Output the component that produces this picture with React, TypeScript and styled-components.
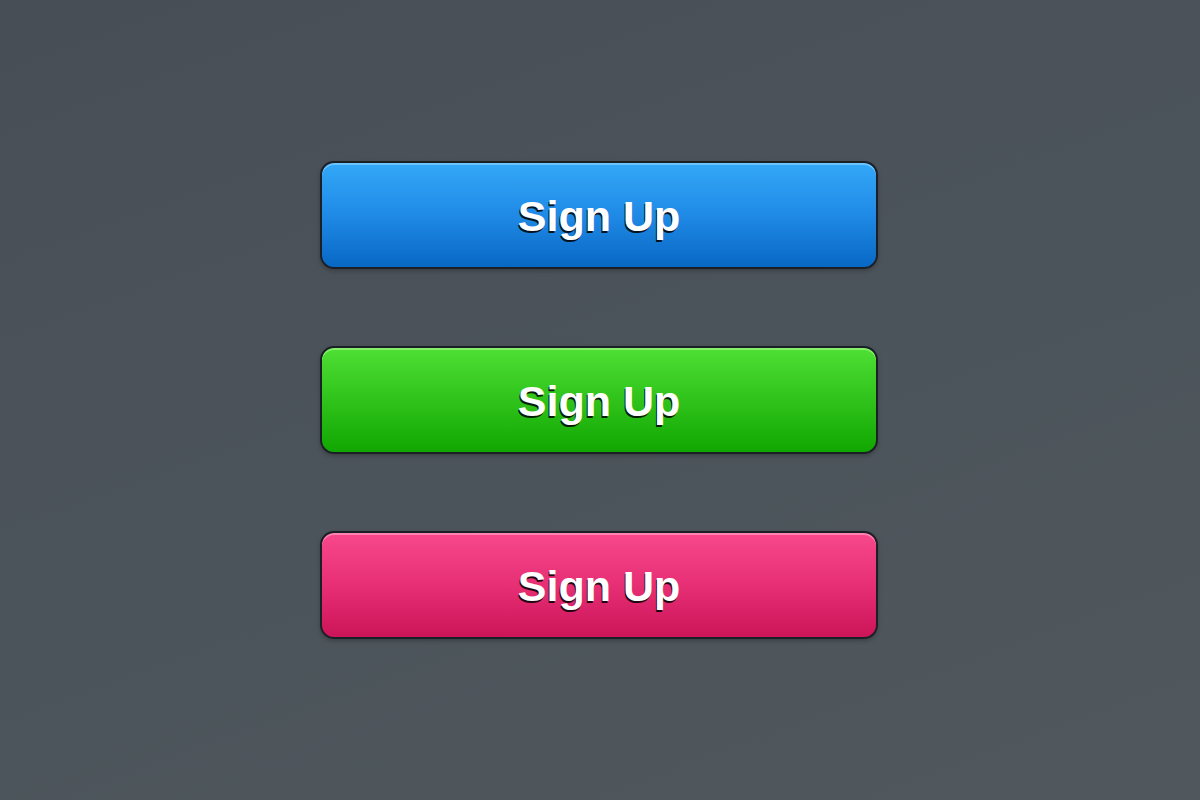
import React from "react";
import styled, { createGlobalStyle } from "styled-components";

const Global = createGlobalStyle`
  html, body { margin: 0; padding: 0; }
  body { font-family: "Liberation Sans", Arial, sans-serif; }
`;

const Page = styled.div`
  width: 1200px;
  height: 800px;
  background: linear-gradient(160deg, #484e56 0%, #4c545b 50%, #50585e 100%);
  display: flex;
  flex-direction: column;
  align-items: center;
  justify-content: center;
  gap: 77px;
`;

const palettes = {
  blue: { top: "#34a8f8", mid: "#1f8ae6", bottom: "#0868c4", hl: "#6cc4ff" },
  green: { top: "#4fdf35", mid: "#2fc31b", bottom: "#12a602", hl: "#86f06a" },
  pink: { top: "#f8488c", mid: "#e72f75", bottom: "#cc1459", hl: "#ff82b1" },
};

type Tone = keyof typeof palettes;

const Button = styled.button<{ $tone: Tone }>`
  width: 558px;
  height: 108px;
  margin-left: -2px;
  box-sizing: border-box;
  border: 2px solid #1b2026;
  border-radius: 14px;
  background: linear-gradient(
    180deg,
    ${(p) => palettes[p.$tone].top} 0%,
    ${(p) => palettes[p.$tone].mid} 50%,
    ${(p) => palettes[p.$tone].bottom} 100%
  );
  box-shadow: inset 0 2px 0 ${(p) => palettes[p.$tone].hl},
    0 2px 4px rgba(0, 0, 0, 0.25);
  display: flex;
  align-items: center;
  justify-content: center;
  padding: 2px 0 0 0;
  cursor: pointer;
  font-family: "Liberation Sans", Arial, sans-serif;
  font-weight: 700;
  font-size: 43px;
  color: #ffffff;
  text-shadow: -1px 2px 0 rgba(0, 0, 0, 0.85);
`;

export default function App() {
  return (
    <>
      <Global />
      <Page>
        <Button $tone="blue">Sign Up</Button>
        <Button $tone="green">Sign Up</Button>
        <Button $tone="pink">Sign Up</Button>
      </Page>
    </>
  );
}
